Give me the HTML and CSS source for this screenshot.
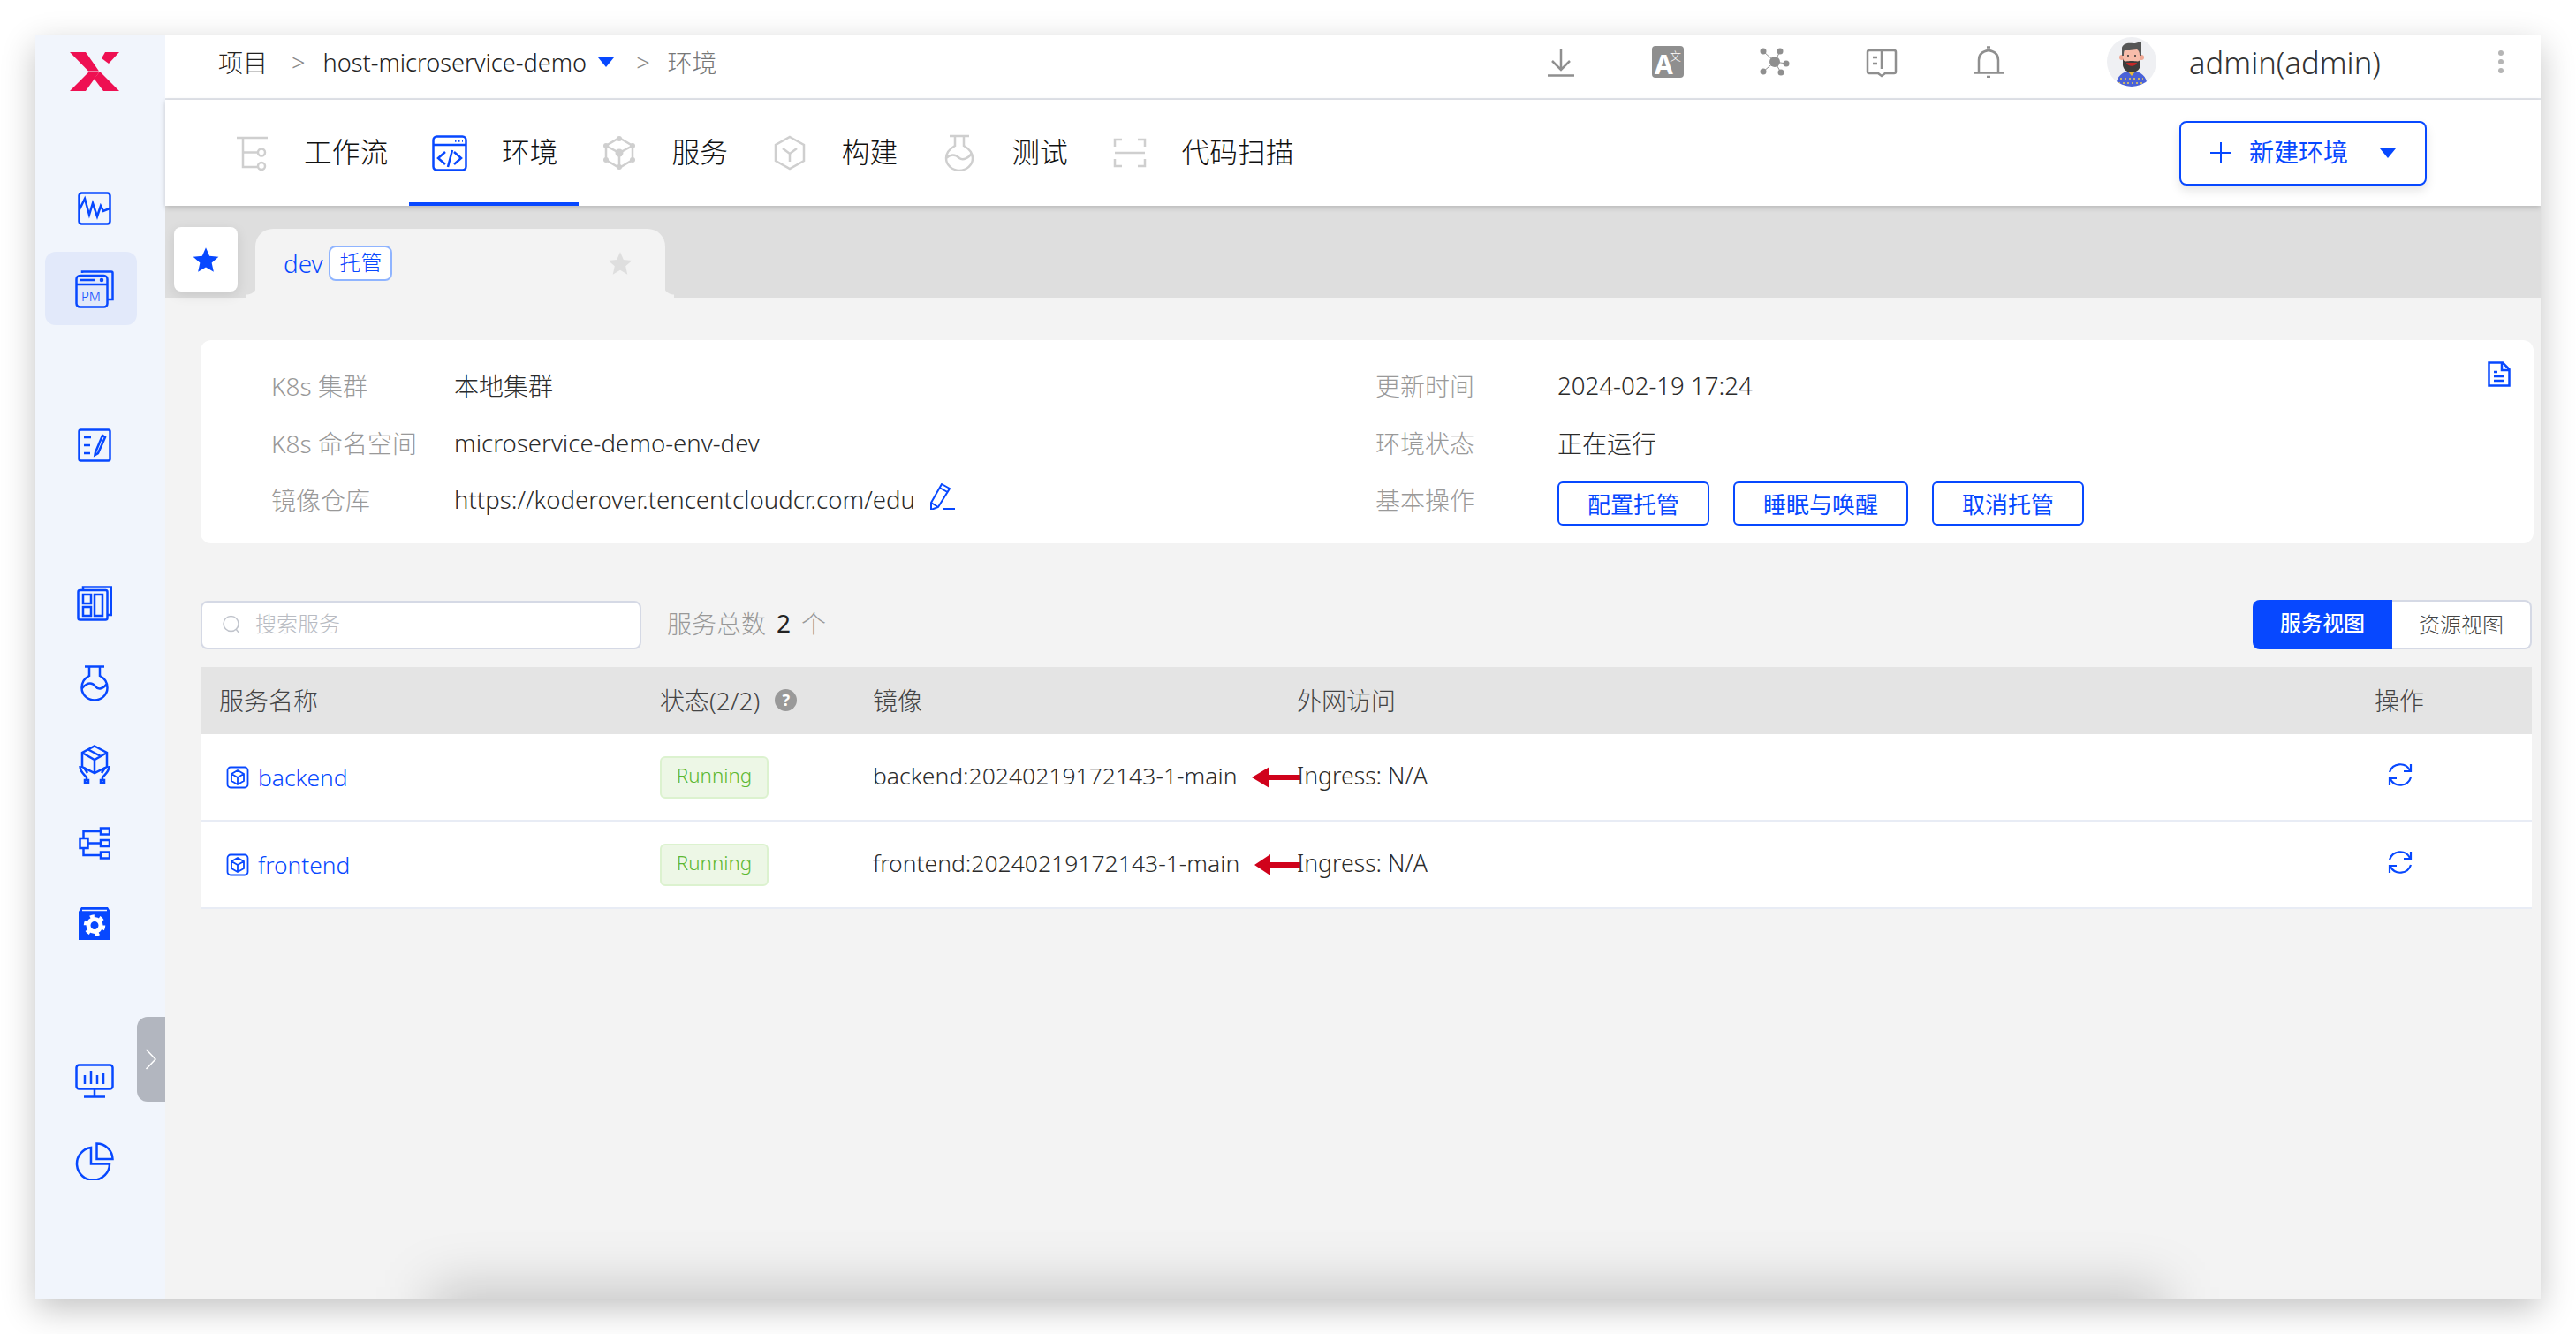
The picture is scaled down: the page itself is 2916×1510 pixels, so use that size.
FILE: index.html
```html
<!DOCTYPE html>
<html lang="zh-CN">
<head>
    <meta charset="UTF-8">
    <title>环境 - host-microservice-demo</title>
    <link rel="stylesheet" href="styles.css">
</head>
<body>
    <div class="window">
        <aside class="sidebar">
            <svg class="logo" width="56" height="44" viewBox="0 0 56 44">
                <polygon points="0,0 18,0 33,21.500 21,21.500" fill="#ee1052"/>
                <polygon points="56,0 40,0 36,7 44,13" fill="#ee1052"/>
                <polygon points="0,44 18,44 33,23 21,23" fill="#ee1052"/>
                <polygon points="56,44 38,44 27.500,30 34,22" fill="#ee1052"/>
            </svg>

            <a class="side-item side-first">
                <svg width="38" height="38" viewBox="0 0 38 38" class="stroke-blue"><rect x="1.500" y="1.500" width="35" height="35" rx="3"/><path d="M2 20L8 8L13 26L17 13L22 28L26 16L29 22L36 19"/></svg>
            </a>
            <a class="side-item side-active">
                <svg width="44" height="44" viewBox="0 0 44 44" class="stroke-blue">
                    <path d="M8 4V2.500H41a1.500 1.500 0 0 1 1.500 1.500V34H37"/>
                    <rect x="1.500" y="7" width="35" height="35.500" rx="4"/>
                    <path d="M1.500 17H36.500M6 12H22"/>
                    <circle cx="30" cy="12" r="1" />
                    <text x="7" y="36" class="pm-text">PM</text>
                </svg>
            </a>

            <a class="side-item side-edit">
                <svg width="38" height="38" viewBox="0 0 38 38" class="stroke-blue"><rect x="1.500" y="1.500" width="35" height="35" rx="2"/><path d="M7 10H15M7 19H14M7 28H14M28 8L20 27L19.500 30L23 28L31 10Z"/></svg>
            </a>

            <a class="side-item side-board">
                <svg width="40" height="40" viewBox="0 0 40 40" class="stroke-blue"><path d="M7 4V1.500H39V33H35"/><rect x="1.500" y="5" width="33" height="33.500" rx="2"/><rect x="7" y="10" width="9" height="10"/><rect x="7" y="24" width="9" height="10"/><rect x="20" y="10" width="9" height="24"/></svg>
            </a>
            <a class="side-item side-flask">
                <svg width="32" height="41" viewBox="0 0 32 41" class="stroke-blue"><path d="M5 1.500H27M10 2V12C4 15 1.500 20 1.500 25.500A14.500 14 0 0 0 30.500 25.500C30.500 20 28 15 22 12V2M2 26C9 18 14 20 17 24C20 28 26 27 30 21"/></svg>
            </a>
            <a class="side-item side-hands">
                <svg width="36" height="44" viewBox="0 0 36 44" class="stroke-blue"><path d="M18 1.500L32 9V25L18 32L4 25V9ZM4 9L18 17L32 9M18 17V32M11 5.500L25 13"/><path d="M1.500 24C1.500 31 6 33 9 37V39M6 26L10 32M34.500 24C34.500 31 30 33 27 37V39M30 26L26 32"/><rect x="7" y="40" width="4" height="3"/><rect x="25" y="40" width="4" height="3"/></svg>
            </a>
            <a class="side-item side-tree">
                <svg width="36" height="37" viewBox="0 0 36 37" class="stroke-blue"><rect x="1.500" y="13" width="9" height="11"/><rect x="25" y="1.500" width="10" height="7"/><rect x="25" y="15" width="10" height="7"/><rect x="25" y="28.500" width="10" height="7"/><path d="M5.500 13V5H25M10 18.500H25M5.500 24V32H25"/></svg>
            </a>
            <a class="side-item side-gear">
                <svg width="36" height="37" viewBox="0 0 36 37">
                    <path d="M3 0H33L36 5V37H0V5Z" fill="#0748ff"/>
                    <path d="M4 3.500H32" stroke="#f1f5fc" stroke-width="1.500"/>
                    <circle cx="18" cy="20.500" r="7" fill="none" stroke="#fff" stroke-width="5"/>
                    <circle cx="18" cy="20.500" r="10.500" fill="none" stroke="#fff" stroke-width="3.500" stroke-dasharray="5 5.990"/>
                </svg>
            </a>

            <a class="side-item side-monitor">
                <svg width="44" height="39" viewBox="0 0 44 39" class="stroke-blue"><rect x="1.500" y="1.500" width="41" height="27" rx="3"/><path d="M11 13V23M18 8V23M25 13V23M32 11V23M22 29V37M10 37.500H34"/></svg>
            </a>
            <a class="side-item side-pie">
                <svg width="44" height="43" viewBox="0 0 44 43" class="stroke-blue"><path d="M18 6A18.500 18.500 0 1 0 39 24.500H18Z"/><path d="M24.500 1.500A18 18 0 0 1 42.500 19H24.500Z"/></svg>
            </a>

            <div class="side-toggle">
                <svg width="14" height="24" viewBox="0 0 14 24"><path d="M1.500 1L12 12L1.500 23" fill="none" stroke="#fff" stroke-width="1.500"/></svg>
            </div>
        </aside>

        <div class="main">
            <header class="topbar">
                <span class="crumb-root">项目</span>
                <span class="crumb-sep">&gt;</span>
                <span class="crumb-project">host-microservice-demo</span>
                <span class="caret"></span>
                <span class="crumb-sep crumb-sep-2">&gt;</span>
                <span class="crumb-last">环境</span>

                <div class="top-icons">
                    <svg width="36" height="36" viewBox="0 0 36 36" class="stroke-gray"><path d="M18 3V27M8 17L18 27L28 17M3 33.500H33"/></svg>
                    <svg width="36" height="36" viewBox="0 0 36 36">
                        <rect width="36" height="36" rx="4" fill="#8f8f8f"/>
                        <text x="3" y="32" class="tr-big">A</text>
                        <text x="20" y="16" class="tr-small">文</text>
                    </svg>
                    <svg width="36" height="36" viewBox="0 0 36 36">
                        <g stroke="#8f8f8f" stroke-width="1"><path d="M18 18L5 6M18 18L24 6M18 18L31 20M18 18L25 30M18 18L5 29"/></g>
                        <g fill="#8f8f8f"><circle cx="18" cy="18" r="6"/><circle cx="5" cy="6" r="3.500"/><circle cx="24" cy="6" r="3.500"/><circle cx="31" cy="20" r="3.500"/><circle cx="25" cy="30" r="3.500"/><circle cx="5" cy="29" r="3.500"/></g>
                    </svg>
                    <svg width="36" height="36" viewBox="0 0 36 36" class="stroke-gray"><path d="M18 5H4a2 2 0 0 0-2 2V29a2 2 0 0 0 2 2H14L18 34L22 31H32a2 2 0 0 0 2-2V7a2 2 0 0 0-2-2H18V26M8 13H13M8 20H13"/></svg>
                    <svg width="36" height="36" viewBox="0 0 36 36" class="stroke-gray"><path d="M7 30V16C7 9 11 6 18 5C25 6 29 9 29 16V30M1 30.500H35M16 1.500H20M16 35H20"/></svg>
                </div>

                <div class="user">
                    <svg class="avatar" width="56" height="56" viewBox="0 0 56 56">
                        <clipPath id="avatarClip"><circle cx="28" cy="28" r="28"/></clipPath>
                        <circle cx="28" cy="28" r="28" fill="#eff0f3"/>
                        <g clip-path="url(#avatarClip)">
                            <path d="M10 56C11 44 17 39 28 38C39 39 45 44 46 56Z" fill="#4a62d8"/>
                            <path d="M23 38H33L28 44Z" fill="#e8b93a"/>
                            <circle cx="17" cy="23" r="3" fill="#f0a793"/>
                            <circle cx="39" cy="23" r="3" fill="#f0a793"/>
                            <rect x="18" y="12" width="20" height="26" rx="8" fill="#f7bcaa"/>
                            <path d="M18 24C19 29 22 27 28 27C34 27 37 29 38 24V32C37 38 32 40 28 40C24 40 19 38 18 32Z" fill="#3d3d3d"/>
                            <path d="M22 29H34C33 34 23 34 22 29Z" fill="#c62828"/>
                            <path d="M17 21V12C18 7 24 6 30 7C34 7 38 5 39 5V21L37 21C37 17 36 15 34 14C28 15 22 15 20 15C19 16 19 19 19 21Z" fill="#565656"/>
                            <circle cx="24" cy="21" r="1" fill="#333"/>
                            <circle cx="32" cy="21" r="1" fill="#333"/>
                            <path d="M15 47H41M13 52H43" stroke="#f2cf4e" stroke-width="1.500" stroke-dasharray="2 3"/>
                        </g>
                    </svg>
                    <span class="username">admin(admin)</span>
                    <span class="more"><i></i><i></i><i></i></span>
                </div>
            </header>

            <nav class="tabs">
                <a class="tab-link">
                    <svg width="40" height="40" viewBox="0 0 40 40" class="stroke-light"><path d="M3 3H38M10 3V36H27M10 19.500H27"/><circle cx="31" cy="19.500" r="4"/><circle cx="31" cy="35" r="4"/></svg>
                    <span>工作流</span>
                </a>
                <a class="tab-link tab-active">
                    <svg width="40" height="41" viewBox="0 0 40 41" class="stroke-blue"><rect x="1.500" y="1.500" width="37" height="38" rx="4"/><path d="M2 11H38M15 19L7 26L15 33M25 19L33 26L25 33M23 17L18 36M26 6.500H27.500M30 6.500H31.500M34 6.500H35"/></svg>
                    <span>环境</span>
                </a>
                <a class="tab-link">
                    <svg width="40" height="40" viewBox="0 0 40 40" class="stroke-light">
                        <path d="M20 3L35 12V28L20 37L5 28V12ZM5 12L20 20L35 12M20 20V37"/>
                        <g class="node-fill"><circle cx="20" cy="4" r="3"/><circle cx="35" cy="12" r="3"/><circle cx="35" cy="28" r="3"/><circle cx="20" cy="36" r="3"/><circle cx="5" cy="28" r="3"/><circle cx="5" cy="12" r="3"/><circle cx="20" cy="20" r="4.500"/></g>
                    </svg>
                    <span>服务</span>
                </a>
                <a class="tab-link">
                    <svg width="40" height="40" viewBox="0 0 40 40" class="stroke-light"><path d="M20 2L36 11V29L20 38L4 29V11ZM12 15L20 21L28 15M20 21V30"/></svg>
                    <span>构建</span>
                </a>
                <a class="tab-link">
                    <svg width="40" height="42" viewBox="0 0 40 42" class="stroke-light"><path d="M9 2H31M15 2V13C8 17 5 22 5 27A15 14 0 0 0 35 27C35 22 32 17 25 13V2M5 27C12 21 17 24 20 27C24 30 31 27 34 21"/></svg>
                    <span>测试</span>
                </a>
                <a class="tab-link">
                    <svg width="40" height="40" viewBox="0 0 40 40" class="stroke-light"><path d="M11 5H3V13M29 5H37V13M3 20H37M3 27V35H11M37 27V35H29"/></svg>
                    <span>代码扫描</span>
                </a>
                <button class="new-env">
                    <svg width="24" height="24" viewBox="0 0 24 24"><path d="M12 0V24M0 12H24" stroke="#0748ff" stroke-width="2"/></svg>
                    <span>新建环境</span>
                    <i class="caret caret-btn"></i>
                </button>
            </nav>

            <div class="env-strip">
                <div class="pin-box">
                    <svg width="30" height="30" viewBox="0 0 24 24"><path d="M12 1L15.300 8.600L23.500 9.400L17.300 14.800L19.100 23L12 18.700L4.900 23L6.700 14.800L.5 9.400L8.700 8.600Z" fill="#0748ff"/></svg>
                </div>
                <div class="env-tab">
                    <span class="env-name">dev</span>
                    <span class="env-badge">托管</span>
                    <svg class="env-star" width="28" height="28" viewBox="0 0 24 24"><path d="M12 1L15.300 8.600L23.500 9.400L17.300 14.800L19.100 23L12 18.700L4.900 23L6.700 14.800L.5 9.400L8.700 8.600Z" fill="#dedede"/></svg>
                </div>
            </div>

            <div class="content">
                <section class="info-card">
                    <span class="info-label">K8s 集群</span>
                    <span class="info-value">本地集群</span>
                    <span class="info-label">更新时间</span>
                    <span class="info-value info-latin">2024-02-19 17:24</span>

                    <span class="info-label">K8s 命名空间</span>
                    <span class="info-value info-latin">microservice-demo-env-dev</span>
                    <span class="info-label">环境状态</span>
                    <span class="info-value">正在运行</span>

                    <span class="info-label">镜像仓库</span>
                    <span class="info-value info-latin">
                        https://koderover.tencentcloudcr.com/edu
                        <svg class="pen" width="28" height="30" viewBox="0 0 28 30"><path d="M13 1L22 6L9 27L1 30L1 22ZM10.500 5L19.500 10M1 22L9 27M14 29H28" fill="none" stroke="#0748ff" stroke-width="2"/></svg>
                    </span>
                    <span class="info-label">基本操作</span>
                    <div class="info-actions">
                        <button class="btn-line">配置托管</button>
                        <button class="btn-line">睡眠与唤醒</button>
                        <button class="btn-line">取消托管</button>
                    </div>

                    <svg class="doc-icon" width="26" height="29" viewBox="0 0 26 29"><path d="M1.500 1.500H17L24.500 9V27.500H1.500ZM16 2V10H24M7 12H11M7 17H19M7 22H19" fill="none" stroke="#0748ff" stroke-width="2.500"/></svg>
                </section>

                <div class="toolbar">
                    <div class="search">
                        <svg width="20" height="22" viewBox="0 0 20 22"><circle cx="9.500" cy="10" r="8.500" fill="none" stroke="#c0c4cc" stroke-width="1.500"/><path d="M15 16L19 21" stroke="#c0c4cc" stroke-width="1.500"/></svg>
                        <span>搜索服务</span>
                    </div>
                    <div class="count"><span class="count-label">服务总数</span><b>2</b><span class="count-label">个</span></div>
                    <div class="view-switch">
                        <span class="view-on">服务视图</span>
                        <span class="view-off">资源视图</span>
                    </div>
                </div>

                <div class="svc-table">
                    <div class="svc-row svc-head">
                        <div class="cell-name">服务名称</div>
                        <div class="cell-status">状态(2/2)<i class="help">?</i></div>
                        <div>镜像</div>
                        <div>外网访问</div>
                        <div>操作</div>
                    </div>
                    <div class="svc-row">
                        <a class="svc-link">
                            <svg width="26" height="26" viewBox="0 0 26 26"><path d="M8 1.500H5A3.500 3.500 0 0 0 1.500 5V21A3.500 3.500 0 0 0 5 24.500H21A3.500 3.500 0 0 0 24.500 21V5A3.500 3.500 0 0 0 21 1.500H18M8 1.500H18M13 5L20 9V17L13 21L6 17V9ZM6 9L13 13L20 9M13 13V21" fill="none" stroke="#0748ff" stroke-width="1.800"/></svg>
                            backend
                        </a>
                        <div><span class="tag-ok">Running</span></div>
                        <div class="cell-image">
                            <span>backend:20240219172143-1-main</span>
                            <svg class="mark-arrow" width="55" height="24" viewBox="0 0 55 24"><path d="M0 12L20 0V9H55V15H20V24Z" fill="#d0021b"/></svg>
                        </div>
                        <div class="cell-ingress">Ingress: N/A</div>
                        <svg class="refresh" width="30" height="30" viewBox="0 0 30 30"><path d="M3 12A12.500 12.500 0 0 1 26 10M27 3V11H19M27 18A12.500 12.500 0 0 1 4 20M3 27V19H11" fill="none" stroke="#0748ff" stroke-width="2.200"/></svg>
                    </div>
                    <div class="svc-row">
                        <a class="svc-link">
                            <svg width="26" height="26" viewBox="0 0 26 26"><path d="M8 1.500H5A3.500 3.500 0 0 0 1.500 5V21A3.500 3.500 0 0 0 5 24.500H21A3.500 3.500 0 0 0 24.500 21V5A3.500 3.500 0 0 0 21 1.500H18M8 1.500H18M13 5L20 9V17L13 21L6 17V9ZM6 9L13 13L20 9M13 13V21" fill="none" stroke="#0748ff" stroke-width="1.800"/></svg>
                            frontend
                        </a>
                        <div><span class="tag-ok">Running</span></div>
                        <div class="cell-image">
                            <span>frontend:20240219172143-1-main</span>
                            <svg class="mark-arrow" width="52" height="24" viewBox="0 0 52 24"><path d="M0 12L18 0V9H52V15H18V24Z" fill="#d0021b"/></svg>
                        </div>
                        <div class="cell-ingress">Ingress: N/A</div>
                        <svg class="refresh" width="30" height="30" viewBox="0 0 30 30"><path d="M3 12A12.500 12.500 0 0 1 26 10M27 3V11H19M27 18A12.500 12.500 0 0 1 4 20M3 27V19H11" fill="none" stroke="#0748ff" stroke-width="2.200"/></svg>
                    </div>
                </div>
            </div>
        </div>

        <div class="bottom-shade"></div>
    </div>
</body>
</html>
```

FILE: styles.css
```css
* {
    box-sizing: border-box;
}
body {
    margin: 0;
    padding: 40px;
    width: 2916px;
    height: 1510px;
    overflow: hidden;
    background: #fff;
    font-family: "Noto Sans", "Noto Sans CJK SC", sans-serif;
    font-size: 28px;
    font-weight: 300;
    color: #333;
}
svg {
    display: block;
    flex: none;
}
.stroke-blue, .stroke-gray, .stroke-light {
    fill: none;
    stroke-width: 2.5;
}
.stroke-blue {
    stroke: #0748ff;
}
.stroke-gray {
    stroke: #8f8f8f;
}
.stroke-light {
    stroke: #cfcfcf;
}
.node-fill {
    fill: #cfcfcf;
    stroke: none;
}
.window {
    position: relative;
    display: flex;
    height: 1430px;
    overflow: hidden;
    box-shadow: 0 12px 36px rgba(0, 0, 0, 0.24);
}

/* left rail */
.sidebar {
    position: relative;
    flex: none;
    width: 147px;
    padding: 19px 0 0 11px;
    background: #f1f5fc;
    display: flex;
    flex-direction: column;
    align-items: flex-start;
}
.side-item {
    display: flex;
    align-items: center;
    justify-content: center;
    height: 76px;
    width: 104px;
    padding-left: 8px;
    flex: none;
}
.logo {
    margin-left: 28px;
}
.side-first {
    margin-top: 95px;
}
.side-active {
    height: 83px;
    margin-top: 11px;
    background: #e2e9fa;
    border-radius: 12px;
}
.side-edit {
    margin-top: 98px;
}
.side-board {
    margin-top: 103px;
}
.side-flask {
    margin-top: 14px;
}
.side-hands {
    margin-top: 16px;
}
.side-tree {
    margin-top: 13.500px;
}
.side-gear {
    margin-top: 15px;
}
.side-monitor {
    margin-top: 102px;
}
.side-pie {
    margin-top: 15px;
}
.pm-text {
    font-size: 15px;
    fill: #0748ff;
    stroke: none;
}
.side-toggle {
    position: absolute;
    right: 0;
    top: 1111px;
    width: 32px;
    height: 96px;
    background: #b2b6bf;
    border-radius: 12px 0 0 12px;
    display: flex;
    align-items: center;
    justify-content: center;
}
.main {
    flex: 1;
    min-width: 0;
    display: flex;
    flex-direction: column;
    background: #f3f3f3;
}

/* top bar */
.topbar {
    flex: none;
    height: 73px;
    padding: 0 42px 11px 60px;
    background: #fff;
    border-bottom: 2px solid #e3e6ec;
    display: flex;
    align-items: center;
    color: #222;
}
.crumb-project {
    font-size: 27.200px;
}
.crumb-sep {
    margin: 0 20px 0 27px;
    color: #8a8a8a;
    font-size: 27px;
}
.crumb-sep-2 {
    margin: 0 20px 0 25px;
}
.crumb-last {
    color: #777;
}
.caret {
    width: 0;
    height: 0;
    margin-left: 13px;
    border-left: 9px solid transparent;
    border-right: 9px solid transparent;
    border-top: 11px solid #0748ff;
}
.top-icons {
    margin-left: auto;
    display: flex;
    gap: 85px;
}
.tr-big {
    font-size: 30px;
    font-weight: 700;
    fill: #fff;
}
.tr-small {
    font-size: 13px;
    fill: #fff;
}
.user {
    margin-left: 116px;
    display: flex;
    align-items: center;
}
.username {
    width: 350px;
    margin-left: 37px;
    font-size: 34.600px;
    color: #333;
}
.more {
    display: flex;
    flex-direction: column;
    gap: 4px;
}
.more i {
    width: 6px;
    height: 6px;
    border-radius: 50%;
    background: #b5b5b5;
}

/* module tabs */
.tabs {
    flex: none;
    height: 120px;
    padding-left: 52px;
    background: #fff;
    box-shadow: 0 2px 6px rgba(0, 0, 0, 0.18);
    display: flex;
    align-items: center;
    position: relative;
}
.tab-link {
    height: 100%;
    padding: 0 24px 0 26px;
    display: flex;
    align-items: center;
    gap: 39px;
    font-size: 31.700px;
    color: #111;
}
.tab-link span {
    margin-bottom: 6px;
}
.tab-active {
    border-bottom: 4px solid #0748ff;
    padding-top: 4px;
}
.new-env {
    margin: 0 129px 0 auto;
    width: 280px;
    height: 73px;
    padding: 0 0 0 33px;
    background: #fff;
    border: 2px solid #0748ff;
    border-radius: 8px;
    box-shadow: 0 6px 12px rgba(0, 0, 0, 0.1);
    display: flex;
    align-items: center;
    font-family: inherit;
    font-size: 28px;
    color: #0748ff;
}
.new-env span {
    margin: 0 0 4px 20px;
}
.caret-btn {
    margin-left: 36px;
}

/* environment tab strip */
.env-strip {
    flex: none;
    height: 104px;
    padding-left: 10px;
    background: #dedede;
    display: flex;
    align-items: flex-start;
}
.pin-box {
    width: 72px;
    height: 73px;
    margin-top: 24px;
    background: #fff;
    border-radius: 8px;
    box-shadow: 0 4px 14px rgba(0, 0, 0, 0.1);
    display: flex;
    align-items: center;
    justify-content: center;
}
.env-tab {
    position: relative;
    width: 464px;
    height: 78px;
    margin: 26px 0 0 20px;
    padding: 0 37px 0 32px;
    background: #f3f3f3;
    border-radius: 20px 20px 0 0;
    display: flex;
    align-items: center;
}
.env-tab::before, .env-tab::after {
    content: "";
    position: absolute;
    bottom: 0;
    width: 10px;
    height: 16px;
}
.env-tab::before {
    left: -10px;
    background: radial-gradient(circle at 0 0, transparent 12px, #f3f3f3 13px);
}
.env-tab::after {
    right: -10px;
    background: radial-gradient(circle at 100% 0, transparent 12px, #f3f3f3 13px);
}
.env-name {
    color: #0748ff;
    font-size: 27.800px;
}
.env-badge {
    margin-left: 7px;
    width: 72px;
    height: 40px;
    background: #fff;
    border: 2px solid #8fb4ff;
    border-radius: 8px;
    font-size: 24px;
    line-height: 34px;
    text-align: center;
    color: #0748ff;
}
.env-star {
    margin-left: auto;
}

/* page body */
.content {
    flex: 1;
    padding: 48px 8px 0 40px;
}
.info-card {
    position: relative;
    height: 230px;
    padding: 19px 0 0 80px;
    background: #fff;
    border-radius: 12px;
    display: grid;
    grid-template-columns: 207px 1043px 206px 1fr;
    grid-auto-rows: 64.500px;
    align-items: center;
}
.info-label {
    color: #999;
}
.info-value {
    display: flex;
    align-items: center;
    color: #2b2b2b;
}
.info-latin {
    font-size: 27.600px;
}
.pen {
    margin-left: 17px;
    margin-top: -6px;
}
.info-actions {
    display: flex;
    gap: 27px;
    margin-top: 9px;
}
.btn-line {
    height: 50px;
    padding: 0 32px;
    background: #fff;
    border: 2px solid #0748ff;
    border-radius: 6px;
    font-family: inherit;
    font-size: 26px;
    color: #0748ff;
}
.doc-icon {
    position: absolute;
    top: 24px;
    right: 26px;
}
.toolbar {
    height: 56px;
    margin: 64px 2px 20px 0;
    display: flex;
    align-items: center;
}
.search {
    width: 499px;
    height: 55px;
    padding-left: 23px;
    background: #fff;
    border: 2px solid #d5d9e5;
    border-radius: 8px;
    display: flex;
    align-items: center;
    gap: 17px;
    font-size: 24px;
    color: #b8bbc2;
}
.search span {
    margin-bottom: 5px;
}
.count {
    margin: 0 0 4px 29px;
    display: flex;
    align-items: center;
    gap: 12px;
}
.count-label {
    color: #999;
}
.count b {
    font-weight: 400;
    color: #222;
}
.view-switch {
    margin-left: auto;
    display: flex;
    font-size: 24px;
}
.view-switch span {
    height: 56px;
    width: 158px;
    line-height: 52px;
    text-align: center;
}
.view-on {
    background: #0748ff;
    border-radius: 8px 0 0 8px;
    color: #fff;
    font-weight: 500;
}
.view-off {
    background: #fff;
    border: 2px solid #d5d9e5;
    border-left: none;
    border-radius: 0 8px 8px 0;
    color: #444;
}
.svc-table {
    margin-right: 2px;
}
.svc-row {
    display: grid;
    grid-template-columns: 520px 241px 480px 1220px 1fr;
    align-items: center;
    height: 99px;
    background: #fff;
    border-bottom: 2px solid #e8ecf5;
}
.svc-head {
    height: 76px;
    padding-bottom: 2px;
    background: #e4e4e4;
    border-bottom: none;
    color: #444;
}
.cell-name {
    padding-left: 21px;
}
.cell-status {
    display: flex;
    align-items: center;
}
.help {
    margin-left: 17px;
    width: 25px;
    height: 25px;
    border-radius: 50%;
    background: #999;
    color: #fff;
    font-size: 18px;
    font-style: normal;
    font-weight: 700;
    line-height: 25px;
    text-align: center;
}
.svc-link {
    padding-left: 29px;
    display: flex;
    align-items: center;
    gap: 10px;
    font-size: 26.400px;
    color: #0748ff;
}
.tag-ok {
    display: inline-block;
    width: 123px;
    height: 48px;
    background: #edf7e6;
    border: 2px solid #dcf2cf;
    border-radius: 6px;
    font-size: 22.400px;
    line-height: 40px;
    text-align: center;
    color: #5cb832;
}
.cell-image {
    display: flex;
    align-items: center;
    white-space: nowrap;
    font-size: 26.500px;
    color: #2b2b2b;
}
.cell-image span, .cell-ingress {
    margin-bottom: 3px;
}
.cell-ingress {
    font-size: 26.600px;
    color: #2b2b2b;
}
.mark-arrow {
    margin-left: 17px;
}
.refresh {
    margin: -5px 0 0 14px;
}
.bottom-shade {
    position: absolute;
    left: 448px;
    width: 1962px;
    top: 1417px;
    height: 100px;
    background: rgba(0, 0, 0, 0.18);
    filter: blur(30px);
}
```
